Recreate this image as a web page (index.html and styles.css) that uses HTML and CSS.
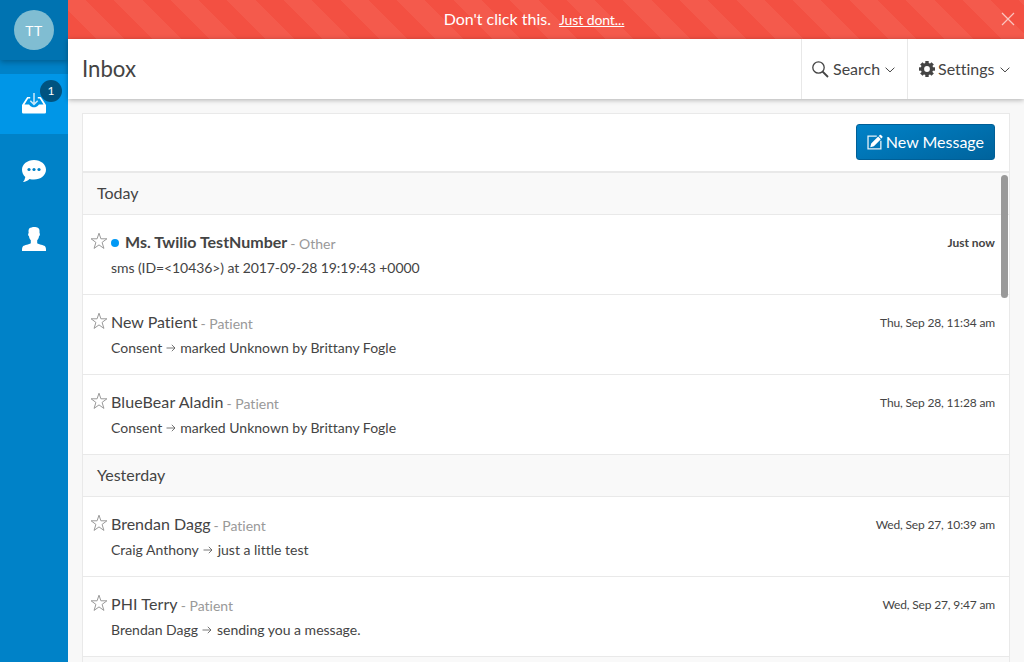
FILE: index.html
```html
<!DOCTYPE html>
<html lang="en">
<head>
<meta charset="utf-8">
<title>Inbox</title>
<link rel="stylesheet" href="styles.css">
</head>
<body>
<svg class="defs" width="0" height="0">
  <symbol id="star" viewBox="0 0 18 18"><path d="M9 1.2 10.9 6.8H16.9L12.1 10.4 13.9 16.4 9 12.9 4.1 16.4 5.9 10.4 1.1 6.8H7.1Z" fill="none" stroke="#999" stroke-width="1"/></symbol>
  <symbol id="arrow" viewBox="0 0 10 8"><path d="M.5 4H9M5.8 .8 9 4 5.8 7.2" fill="none" stroke="#555" stroke-width=".8"/></symbol>
  <symbol id="chevron" viewBox="0 0 10 6"><path d="M.6 .7 5 4.9 9.4 .7" fill="none" stroke="#444" stroke-width="1"/></symbol>
</svg>
<div class="app">
  <nav class="sidebar">
    <div class="profile"><span class="avatar">TT</span></div>
    <a class="nav-item active">
      <svg width="24" height="22" viewBox="0 0 24 22"><path d="M0 13 5.2 5H8.2V6.6H6.2L2.5 12.5H6.5C8 12.5 8.2 15.3 12 15.3S16 12.5 17.500 12.500H21.500L17.800 6.600H15.800V5H18.800L24 13V20.200Q24 21.500 22.700 21.500H1.300Q0 21.500 0 20.200Z" fill="#fff"/><path d="M12 1V12M8.300 8.700 12 12.400 15.700 8.700" fill="none" stroke="#fff" stroke-opacity=".8" stroke-width="1.500"/></svg>
      <span class="badge">1</span>
    </a>
    <a class="nav-item">
      <svg width="24" height="24" viewBox="0 0 24 24"><path d="M12 1C18.700 1 24 5.300 24 10.800S18.700 20.600 12 20.600Q9.700 20.600 7.500 20C5.800 21.800 3.500 22.800 1 23Q3 20.600 3.300 18C1.200 16.200 0 13.600 0 10.800 0 5.300 5.300 1 12 1Z" fill="#fff"/><g fill="#0082c8"><circle cx="7" cy="10.500" r="1.600"/><circle cx="12" cy="10.500" r="1.600"/><circle cx="17" cy="10.500" r="1.600"/></g></svg>
    </a>
    <a class="nav-item">
      <svg width="24" height="24" viewBox="0 0 24 24"><path d="M12 0C15.500 0 17.800 1.200 17.500 4V6C18.300 6.400 17.900 9 17 9.300 16.700 11.500 16 12.500 15.200 13.300V16.200C17 17.500 21.500 17.800 23 19.300 24 20.500 24 22 24 24H0C0 22 0 20.500 1 19.300 2.500 17.800 7 17.500 8.800 16.200V13.300C8 12.500 7.300 11.500 7 9.300 6.100 9 5.700 6.400 6.700 6 6.300 3.500 6.500 .8 9 .8 9.500 .2 10.600 0 12 0Z" fill="#fff"/></svg>
    </a>
  </nav>
  <div class="main">
    <div class="alert">
      <span>Don't click this.</span><a class="alert-link">Just dont...</a>
      <svg class="close" width="14" height="14" viewBox="0 0 14 14"><path d="M1 1 13 13M13 1 1 13" stroke="#fff" stroke-opacity=".65" stroke-width="1.200"/></svg>
    </div>
    <header class="topbar">
      <h1>Inbox</h1>
      <a class="menu search">
        <svg width="17" height="17" viewBox="0 0 17 17"><circle cx="6.500" cy="6.500" r="5.700" fill="none" stroke="#444" stroke-width="1.300"/><path d="M10.500 10.500 16 16" stroke="#444" stroke-width="1.800"/></svg>
        <span>Search</span>
        <svg class="chev" width="10" height="6"><use href="#chevron"/></svg>
      </a>
      <a class="menu settings">
        <svg width="16" height="16" viewBox="0 0 16 16"><g fill="#444"><rect x="6.300" width="3.400" height="16"/><rect x="6.300" width="3.400" height="16" transform="rotate(45 8 8)"/><rect x="6.300" width="3.400" height="16" transform="rotate(90 8 8)"/><rect x="6.300" width="3.400" height="16" transform="rotate(135 8 8)"/><circle cx="8" cy="8" r="6.200"/></g><circle cx="8" cy="8" r="2.900" fill="#fff"/></svg>
        <span>Settings</span>
        <svg class="chev" width="10" height="6"><use href="#chevron"/></svg>
      </a>
    </header>
    <main class="panel">
      <div class="toolbar">
        <button class="new-message"><svg width="17" height="17" viewBox="0 0 17 17"><path d="M10.500 1.600H1.100V15.400H14.900V6.500" fill="none" stroke="#fff" stroke-opacity=".9" stroke-width="1.400"/><path d="M3.500 13.500 4.500 9.600 12 2.100 14.900 5 7.400 12.500ZM12.700 1.400 14 .3Q14.500 0 15 .4L16.500 1.900Q17 2.500 16.500 3L15.500 4.200Z" fill="#fff"/></svg><span>New Message</span></button>
      </div>
      <div class="list">
        <h2>Today</h2>
        <article class="unread"><svg class="star" width="18" height="18"><use href="#star"/></svg>
          <div class="body"><div class="line"><i class="dot"></i><strong>Ms. Twilio TestNumber</strong><small>- Other</small></div><p class="sms">sms (ID=&lt;10436&gt;) at 2017-09-28 19:19:43 +0000</p></div><time>Just now</time></article>
        <article><svg class="star" width="18" height="18"><use href="#star"/></svg>
          <div class="body"><div class="line"><strong>New Patient</strong><small>- Patient</small></div><p>Consent<svg class="arrow" width="10" height="8"><use href="#arrow"/></svg>marked Unknown by Brittany Fogle</p></div><time>Thu, Sep 28, 11:34 am</time></article>
        <article><svg class="star" width="18" height="18"><use href="#star"/></svg>
          <div class="body"><div class="line"><strong class="wide">BlueBear Aladin</strong><small>- Patient</small></div><p>Consent<svg class="arrow" width="10" height="8"><use href="#arrow"/></svg>marked Unknown by Brittany Fogle</p></div><time>Thu, Sep 28, 11:28 am</time></article>
        <h2>Yesterday</h2>
        <article><svg class="star" width="18" height="18"><use href="#star"/></svg>
          <div class="body"><div class="line"><strong>Brendan Dagg</strong><small>- Patient</small></div><p>Craig Anthony<svg class="arrow" width="10" height="8"><use href="#arrow"/></svg>&#8202;just a little test</p></div><time>Wed, Sep 27, 10:39 am</time></article>
        <article><svg class="star" width="18" height="18"><use href="#star"/></svg>
          <div class="body"><div class="line"><strong class="wide">PHI Terry</strong><small>- Patient</small></div><p>Brendan Dagg<svg class="arrow" width="10" height="8"><use href="#arrow"/></svg>&#8202;sending you a message.</p></div><time>Wed, Sep 27, 9:47 am</time></article>
        <h2></h2>
        <span class="scrollbar"></span>
      </div>
    </main>
  </div>
</div>
</body>
</html>
```
FILE: styles.css
```css
* { box-sizing: border-box; }
body { margin: 0; font-family: Lato, sans-serif; font-variant-ligatures: none; color: #444; background: #f8f8f8; overflow: hidden; }
.defs { position: absolute; }
.app { display: flex; height: 662px; overflow: hidden; }
.sidebar { width: 68px; flex: none; background: #0082c8; }
.profile { height: 60px; margin-bottom: 14px; background: #0073b1; box-shadow: 0 2px 6px rgba(0,0,0,.3); display: flex; align-items: center; justify-content: center; }
.avatar { width: 40px; height: 40px; border-radius: 50%; background: #80bdd2; color: #fff; font-size: 14px; line-height: 41px; text-align: center; letter-spacing: .5px; }
.nav-item { height: 60px; margin-bottom: 8px; display: flex; align-items: center; justify-content: center; position: relative; }
.nav-item svg { display: block; margin-top: -2px; }
.nav-item.active { background: #0096e7; }
.badge { position: absolute; left: 40px; top: 6px; width: 22px; height: 22px; border-radius: 50%; background: #005380; color: #fff; font-size: 12px; line-height: 22px; text-align: center; }
.main { flex: 1; min-width: 0; display: flex; flex-direction: column; }
.alert { height: 39px; flex: none; position: relative; display: flex; justify-content: center; align-items: baseline; gap: 8px; padding-right: 24px; color: #fff; font-size: 16px; line-height: 37px; background: repeating-linear-gradient(45deg, #f35042 0 20px, #f45a4c 20px 40px); }
.alert-link { font-size: 14px; letter-spacing: -.1px; text-decoration: underline; }
.close { position: absolute; right: 9px; top: 12px; }
.topbar { height: 60px; flex: none; background: #fff; display: flex; box-shadow: 0 1px 5px rgba(0,0,0,.3); position: relative; }
h1 { margin: 0 auto 0 14px; font-size: 22.2px; font-weight: 400; line-height: 60px; }
.menu { display: flex; align-items: center; gap: 4px; border-left: 1px solid #e8e8e8; font-size: 16px; padding-left: 11px; }
.menu span { padding-bottom: 2px; }
.search { width: 106px; padding-left: 10px; }
.search .chev { margin-left: 1px; }
.settings { width: 117px; }
.settings span { margin-left: -1px; }
.settings .chev { margin-left: 1px; }
.chev { margin-top: 2px; }
.panel { margin: 14px 14px 0; border: 1px solid #e9e9e9; border-bottom: 0; background: #fff; flex: 1; min-height: 0; overflow: hidden; }
.toolbar { height: 57px; display: flex; justify-content: flex-end; padding: 10px 14px; }
.new-message { width: 139px; height: 36px; display: flex; align-items: center; gap: 3px; padding: 0 10px; border: 1px solid #005f97; border-radius: 3px; background: linear-gradient(160deg, #0082c8, #00639c); color: #fff; font: 16px Lato, sans-serif; white-space: nowrap; }
.new-message span { padding-bottom: 2px; }
.list { border-top: 2px solid #e9e9e9; position: relative; }
h2 { margin: 0; height: 42px; padding-left: 14px; background: #f9f9f9; border-bottom: 1px solid #e9e9e9; font-size: 16px; font-weight: 400; line-height: 40px; }
article { height: 80px; display: flex; padding: 17px 14px 0 7px; border-bottom: 1px solid #e9e9e9; }
.star { flex: none; margin-right: 3px; }
.body { flex: 1; white-space: nowrap; margin-top: -1px; }
.line { display: flex; align-items: baseline; height: 24px; line-height: 21px; }
strong { font-size: 16px; font-weight: 400; }
.wide { letter-spacing: .1px; }
small { font-size: 14px; color: #999; margin-left: 3px; position: relative; top: 1px; }
.dot { width: 8px; height: 8px; border-radius: 50%; background: #0099f5; margin-right: 6px; position: relative; top: -1px; }
p { margin: 0; font-size: 14px; line-height: 25px; }
.sms { letter-spacing: -.08px; }
.arrow { margin: 0 4px; vertical-align: 1px; }
time { font-size: 12px; line-height: 22px; letter-spacing: -.16px; white-space: nowrap; }
.unread strong, .unread time { font-weight: 700; }
.unread time { letter-spacing: 0; }
.scrollbar { position: absolute; right: 1px; top: 2px; width: 7px; height: 123px; border-radius: 4px; background: #999; }
```
